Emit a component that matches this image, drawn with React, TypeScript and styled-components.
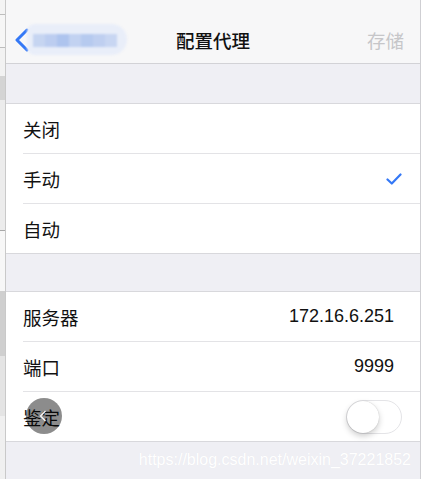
import React from 'react';
import styled, {createGlobalStyle} from "styled-components";

const GlobalStyle = createGlobalStyle`
    html, body {
        margin: 0;
        padding: 0;
        background: #efeff4;
    }
    body {
        font-family: "Liberation Sans", "Noto Sans CJK SC", sans-serif;
        -webkit-font-smoothing: antialiased;
    }
`

// strip of the window lying behind the phone screen
const bands = [
    {h: 14, c: "#f4f4f4"},
    {h: 1, c: "#bdbdbd"},
    {h: 32, c: "#f6f6f6"},
    {h: 1, c: "#bdbdbd"},
    {h: 28, c: "#f2f2f2"},
    {h: 24, c: "#d4d4d4"},
    {h: 130, c: "#ececec"},
    {h: 1, c: "#a8a8a8"},
    {h: 60, c: "#f7f7f7"},
    {h: 65, c: "#cfcfcf"},
    {h: 60, c: "#e4e4e4"},
    {h: 63, c: "#f0f0f0"},
];

const mosaic = ["#c6d5f1", "#bccdf0", "#aec4ee", "#c2d2f1", "#b6caef", "#bfcff0", "#c8d6f2"];

export default function App() {
    return (
        <>
            <GlobalStyle/>
            <Desk>
                <Behind>
                    {bands.map((b, i) => (
                        <Band key={i} $h={b.h} $c={b.c}/>
                    ))}
                </Behind>
                <Screen>
                    <NavBar>
                        <BackButton>
                            <svg width="14" height="24" viewBox="0 0 14 24">
                                <path d="M12 2 L2 12 L12 22" fill="none" stroke="#3478f6" strokeWidth="3"
                                      strokeLinecap="round" strokeLinejoin="round"/>
                            </svg>
                            <Blurred>
                                <TileRow>
                                    {mosaic.map((c, i) => <Tile key={i} $c={c}/>)}
                                </TileRow>
                            </Blurred>
                        </BackButton>
                        <Title>配置代理</Title>
                        <SaveButton>存储</SaveButton>
                    </NavBar>

                    <Group $gap={39}>
                        <Row>
                            <Label>关闭</Label>
                        </Row>
                        <Row>
                            <Label>手动</Label>
                            <svg width="16" height="12" viewBox="0 0 16 12">
                                <path d="M1.5 6.5 L5.8 10.5 L14.5 1.5" fill="none" stroke="#3478f6" strokeWidth="2.2"
                                      strokeLinecap="round" strokeLinejoin="round"/>
                            </svg>
                        </Row>
                        <Row $last>
                            <Label>自动</Label>
                        </Row>
                    </Group>

                    <Group $gap={37}>
                        <Row>
                            <Label>服务器</Label>
                            <Value>172.16.6.251</Value>
                        </Row>
                        <Row>
                            <Label>端口</Label>
                            <Value>9999</Value>
                        </Row>
                        <Row $last>
                            <Label>鉴定</Label>
                            <Switch>
                                <Knob/>
                            </Switch>
                            <TouchButton>
                                <svg width="8" height="12" viewBox="0 0 8 12">
                                    <path d="M6.5 1 L1.5 6 L6.5 11" fill="none" stroke="#fff" strokeWidth="1.2"/>
                                </svg>
                            </TouchButton>
                        </Row>
                    </Group>

                    <Footer>
                        <Watermark>https://blog.csdn.net/weixin_37221852</Watermark>
                    </Footer>
                </Screen>
            </Desk>
        </>
    );
}

const Desk = styled.div`
    display: flex;
    width: 421px;
    height: 479px;
    overflow: hidden;
`
const Behind = styled.div`
    width: 5px;
    display: flex;
    flex-direction: column;
    border-right: 1px solid #c9c9c9;
`
const Band = styled.div<{ $h: number; $c: string }>`
    height: ${p => p.$h}px;
    background: ${p => p.$c};
    flex-shrink: 0;
`
const Screen = styled.div`
    width: 414px;
    background: #efeff4;
    border-right: 1px solid #cfcfd3;
    display: flex;
    flex-direction: column;
`
const NavBar = styled.div`
    height: 43px;
    padding-top: 20px;
    background: #f7f7f8;
    border-bottom: 1px solid #d2d2d6;
    display: flex;
    align-items: center;
    justify-content: space-between;
    position: relative;
`
const BackButton = styled.div`
    display: flex;
    align-items: center;
    padding-left: 9px;
    margin-top: -4px;
`
const Blurred = styled.div`
    display: flex;
    align-items: flex-end;
    height: 31px;
    width: 100px;
    margin-left: -2px;
    padding: 0 12px 8px 6px;
    box-sizing: border-box;
    background: #e9eef9;
    border-radius: 8px 16px 16px 8px;
    filter: blur(1px);
`
const TileRow = styled.div`
    display: flex;
    height: 13px;
`
const Tile = styled.span<{ $c: string }>`
    width: 12px;
    background: ${p => p.$c};
`
const Title = styled.div`
    position: absolute;
    left: 0;
    right: 0;
    bottom: 0;
    height: 43px;
    line-height: 40px;
    text-align: center;
    font-family: "Noto Sans CJK SC", sans-serif;
    font-weight: 500;
    font-size: 18.5px;
    color: #111;
    pointer-events: none;
`
const SaveButton = styled.div`
    font-family: "Noto Sans CJK SC", sans-serif;
    font-size: 18.5px;
    color: #c6c6c9;
    padding-right: 16px;
    margin-top: -4px;
`
const Group = styled.div<{ $gap: number }>`
    margin-top: ${p => p.$gap}px;
    background: #fff;
    border-top: 1px solid #d8d8dc;
    border-bottom: 1px solid #d8d8dc;
    padding-left: 17px;
`
const Row = styled.div<{ $last?: boolean }>`
    height: 49px;
    display: flex;
    align-items: center;
    justify-content: space-between;
    padding-right: 18px;
    border-bottom: ${p => p.$last ? "none" : "1px solid #e3e3e6"};
    position: relative;
`
const Label = styled.span`
    font-family: "Noto Sans CJK SC", sans-serif;
    font-size: 18.5px;
    color: #111;
`
const Value = styled.span`
    font-family: "Liberation Sans", sans-serif;
    font-size: 18px;
    color: #111;
    padding-right: 8px;
`
const Switch = styled.div`
    width: 54px;
    height: 32px;
    border-radius: 17px;
    border: 1px solid #e4e4e7;
    background: #fff;
    position: relative;
`
const Knob = styled.div`
    position: absolute;
    left: 0;
    top: 0;
    width: 32px;
    height: 32px;
    border-radius: 50%;
    background: #fff;
    box-shadow: 0 3px 6px rgba(0, 0, 0, 0.2), 0 0 1px rgba(0, 0, 0, 0.25);
`
const TouchButton = styled.div`
    position: absolute;
    left: 3px;
    top: 6px;
    width: 36px;
    height: 36px;
    border-radius: 50%;
    background: rgba(0, 0, 0, 0.45);
    display: flex;
    align-items: center;
    justify-content: center;
    padding-right: 2px;
    box-sizing: border-box;
`
const Footer = styled.div`
    flex: 1;
    display: flex;
    justify-content: flex-end;
    padding: 8px 9px 0 0;
`
const Watermark = styled.span`
    font-family: "Liberation Sans", sans-serif;
    font-size: 16px;
    line-height: 20px;
    color: #fff;
    text-shadow: 0 0 1px rgba(0, 0, 0, 0.05);
`
